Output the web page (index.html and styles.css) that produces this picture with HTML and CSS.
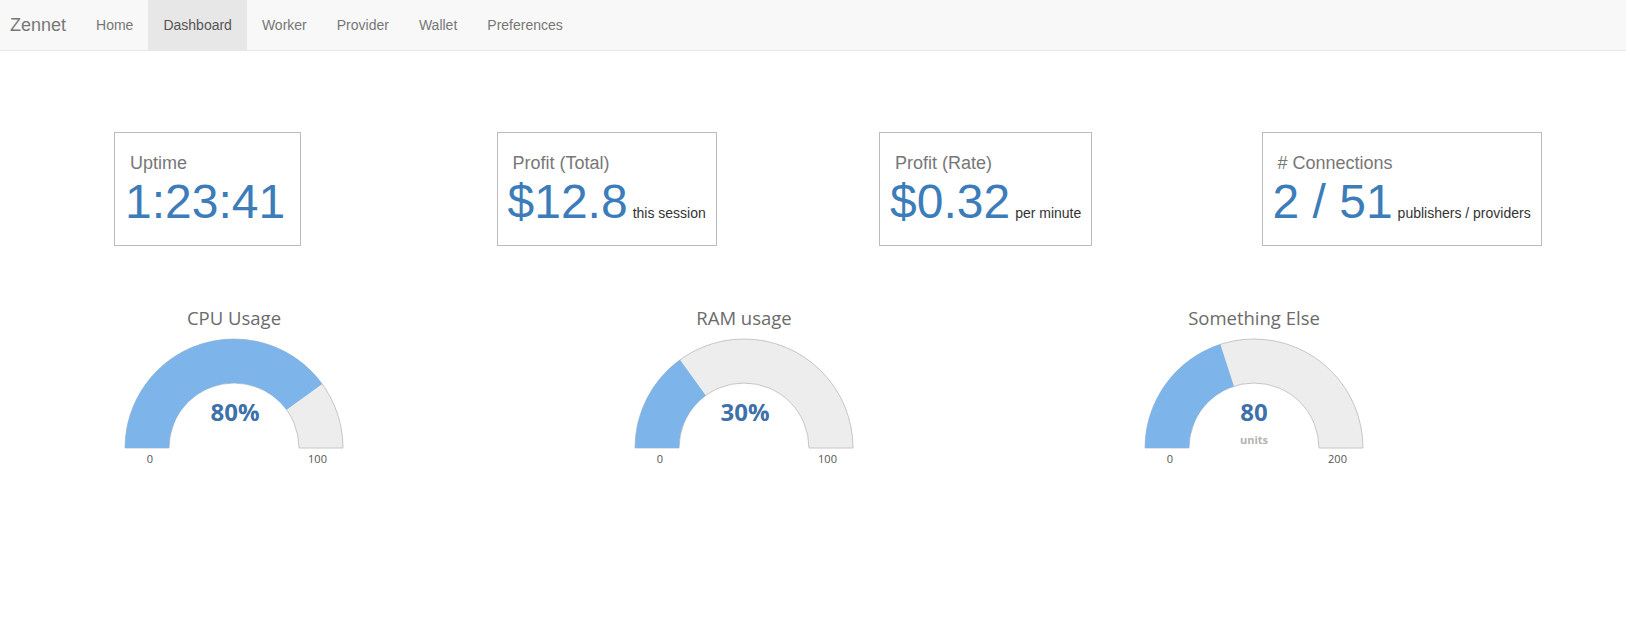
FILE: index.html
```html
<!DOCTYPE html>
<html>
<head>
<meta charset="utf-8">
<title>Zennet Dashboard</title>
<link rel="stylesheet" href="styles.css">
</head>
<body>
<nav class="navbar">
  <a class="brand" href="#">Zennet</a>
  <ul class="nav">
    <li><a href="#">Home</a></li>
    <li class="active"><a href="#">Dashboard</a></li>
    <li><a href="#">Worker</a></li>
    <li><a href="#">Provider</a></li>
    <li><a href="#">Wallet</a></li>
    <li><a href="#">Preferences</a></li>
  </ul>
</nav>

<main class="main">
  <section class="stats">
    <div class="stat-col">
      <div class="card">
        <div class="card-label">Uptime</div>
        <div class="card-value"><span class="num">1:23:41</span></div>
      </div>
    </div>
    <div class="stat-col">
      <div class="card">
        <div class="card-label">Profit (Total)</div>
        <div class="card-value"><span class="num">$12.8</span><span class="sub">this session</span></div>
      </div>
    </div>
    <div class="stat-col">
      <div class="card">
        <div class="card-label">Profit (Rate)</div>
        <div class="card-value"><span class="num">$0.32</span><span class="sub">per minute</span></div>
      </div>
    </div>
    <div class="stat-col">
      <div class="card">
        <div class="card-label"># Connections</div>
        <div class="card-value"><span class="num">2 / 51</span><span class="sub">publishers / providers</span></div>
      </div>
    </div>
  </section>

  <section class="gauges">
    <div class="gauge-col">
      <div class="gauge">
        <div class="gauge-title">CPU Usage</div>
        <svg class="gauge-svg" width="260" height="140" viewBox="0 0 260 140">
          <path class="g-bg" d="M 21 118 A 109 109 0 0 1 239 118 L 195 118 A 65 65 0 0 0 65 118 Z"/>
          <path class="g-val" d="M 21 118 A 109 109 0 0 1 218.18 53.93 L 182.59 79.79 A 65 65 0 0 0 65 118 Z"/>
          <text class="g-value" x="131" y="91" text-anchor="middle">80%</text>
          <text class="g-lim" x="46" y="133" text-anchor="middle">0</text>
          <text class="g-lim" x="213.5" y="133" text-anchor="middle">100</text>
        </svg>
      </div>
    </div>
    <div class="gauge-col">
      <div class="gauge">
        <div class="gauge-title">RAM usage</div>
        <svg class="gauge-svg" width="260" height="140" viewBox="0 0 260 140">
          <path class="g-bg" d="M 21 118 A 109 109 0 0 1 239 118 L 195 118 A 65 65 0 0 0 65 118 Z"/>
          <path class="g-val" d="M 21 118 A 109 109 0 0 1 65.93 29.82 L 91.79 65.41 A 65 65 0 0 0 65 118 Z"/>
          <text class="g-value" x="131" y="91" text-anchor="middle">30%</text>
          <text class="g-lim" x="46" y="133" text-anchor="middle">0</text>
          <text class="g-lim" x="213.5" y="133" text-anchor="middle">100</text>
        </svg>
      </div>
    </div>
    <div class="gauge-col">
      <div class="gauge">
        <div class="gauge-title">Something Else</div>
        <svg class="gauge-svg" width="260" height="140" viewBox="0 0 260 140">
          <path class="g-bg" d="M 21 118 A 109 109 0 0 1 239 118 L 195 118 A 65 65 0 0 0 65 118 Z"/>
          <path class="g-val" d="M 21 118 A 109 109 0 0 1 96.32 14.34 L 109.91 56.18 A 65 65 0 0 0 65 118 Z"/>
          <text class="g-value" x="130" y="91" text-anchor="middle">80</text>
          <text class="g-unit" x="130" y="114" text-anchor="middle">units</text>
          <text class="g-lim" x="46" y="133" text-anchor="middle">0</text>
          <text class="g-lim" x="213.5" y="133" text-anchor="middle">200</text>
        </svg>
      </div>
    </div>
  </section>
</main>
</body>
</html>
```

FILE: styles.css
```css
* { box-sizing: border-box; }

html, body {
  margin: 0;
  padding: 0;
  background: #fff;
}

body {
  font-family: "Liberation Sans", Arial, Helvetica, sans-serif;
  font-size: 14px;
  line-height: 20px;
  color: #333;
}

a { text-decoration: none; }

/* ---------- navbar ---------- */
.navbar {
  display: flex;
  align-items: stretch;
  height: 51px;
  background: #f8f8f8;
  border-bottom: 1px solid #e7e7e7;
}

.brand {
  display: block;
  padding: 15px 15px 15px 10px;
  font-size: 18px;
  line-height: 20px;
  height: 50px;
  color: #777;
}

.nav {
  display: flex;
  margin: 0;
  padding: 0;
  list-style: none;
}

.nav li a {
  display: block;
  padding: 15px;
  line-height: 20px;
  height: 50px;
  font-size: 14px;
  color: #777;
}

.nav li.active a {
  background: #e7e7e7;
  color: #555;
}

/* ---------- main ---------- */
.main {
  width: 1530px;
  margin-left: 34px;
}

.stats {
  display: grid;
  grid-template-columns: repeat(4, 382.5px);
  margin-top: 81px;
}

.stat-col {
  padding-left: 80px;
}

.card {
  display: inline-block;
  border: 1px solid #bbb;
  padding: 20px 10px 19px 10px;
  white-space: nowrap;
}

.card-label {
  padding-left: 5px;
  font-size: 18px;
  line-height: 20px;
  color: #777;
}

.card-value {
  margin-top: 5px;
  font-size: 48px;
  line-height: 48px;
  color: #3c7db9;
}

.num {
  margin-right: 5px;
}

.sub {
  font-size: 14px;
  line-height: 14px;
  color: #333;
}

/* ---------- gauges ---------- */
.gauges {
  display: grid;
  grid-template-columns: repeat(3, 510px);
  margin-top: 60px;
}

.gauge {
  width: 400px;
  display: flex;
  flex-direction: column;
  align-items: center;
}

.gauge-title {
  font-family: "Open Sans", "DejaVu Sans", sans-serif;
  font-size: 18.5px;
  line-height: 24px;
  color: #6b6b6b;
  height: 24px;
}

.gauge-svg {
  display: block;
}

.g-bg {
  fill: #ededed;
  stroke: #c6c6c6;
  stroke-width: 1;
}

.g-val {
  fill: #7db4ea;
}

.g-value {
  font-family: "Open Sans", "DejaVu Sans", sans-serif;
  font-weight: 700;
  font-size: 24px;
  fill: #3e70aa;
}

.g-unit {
  font-family: "Open Sans", "DejaVu Sans", sans-serif;
  font-weight: 700;
  font-size: 11px;
  fill: #b3b3b3;
}

.g-lim {
  font-family: "Open Sans", "DejaVu Sans", sans-serif;
  font-size: 11px;
  fill: #555;
}
```
